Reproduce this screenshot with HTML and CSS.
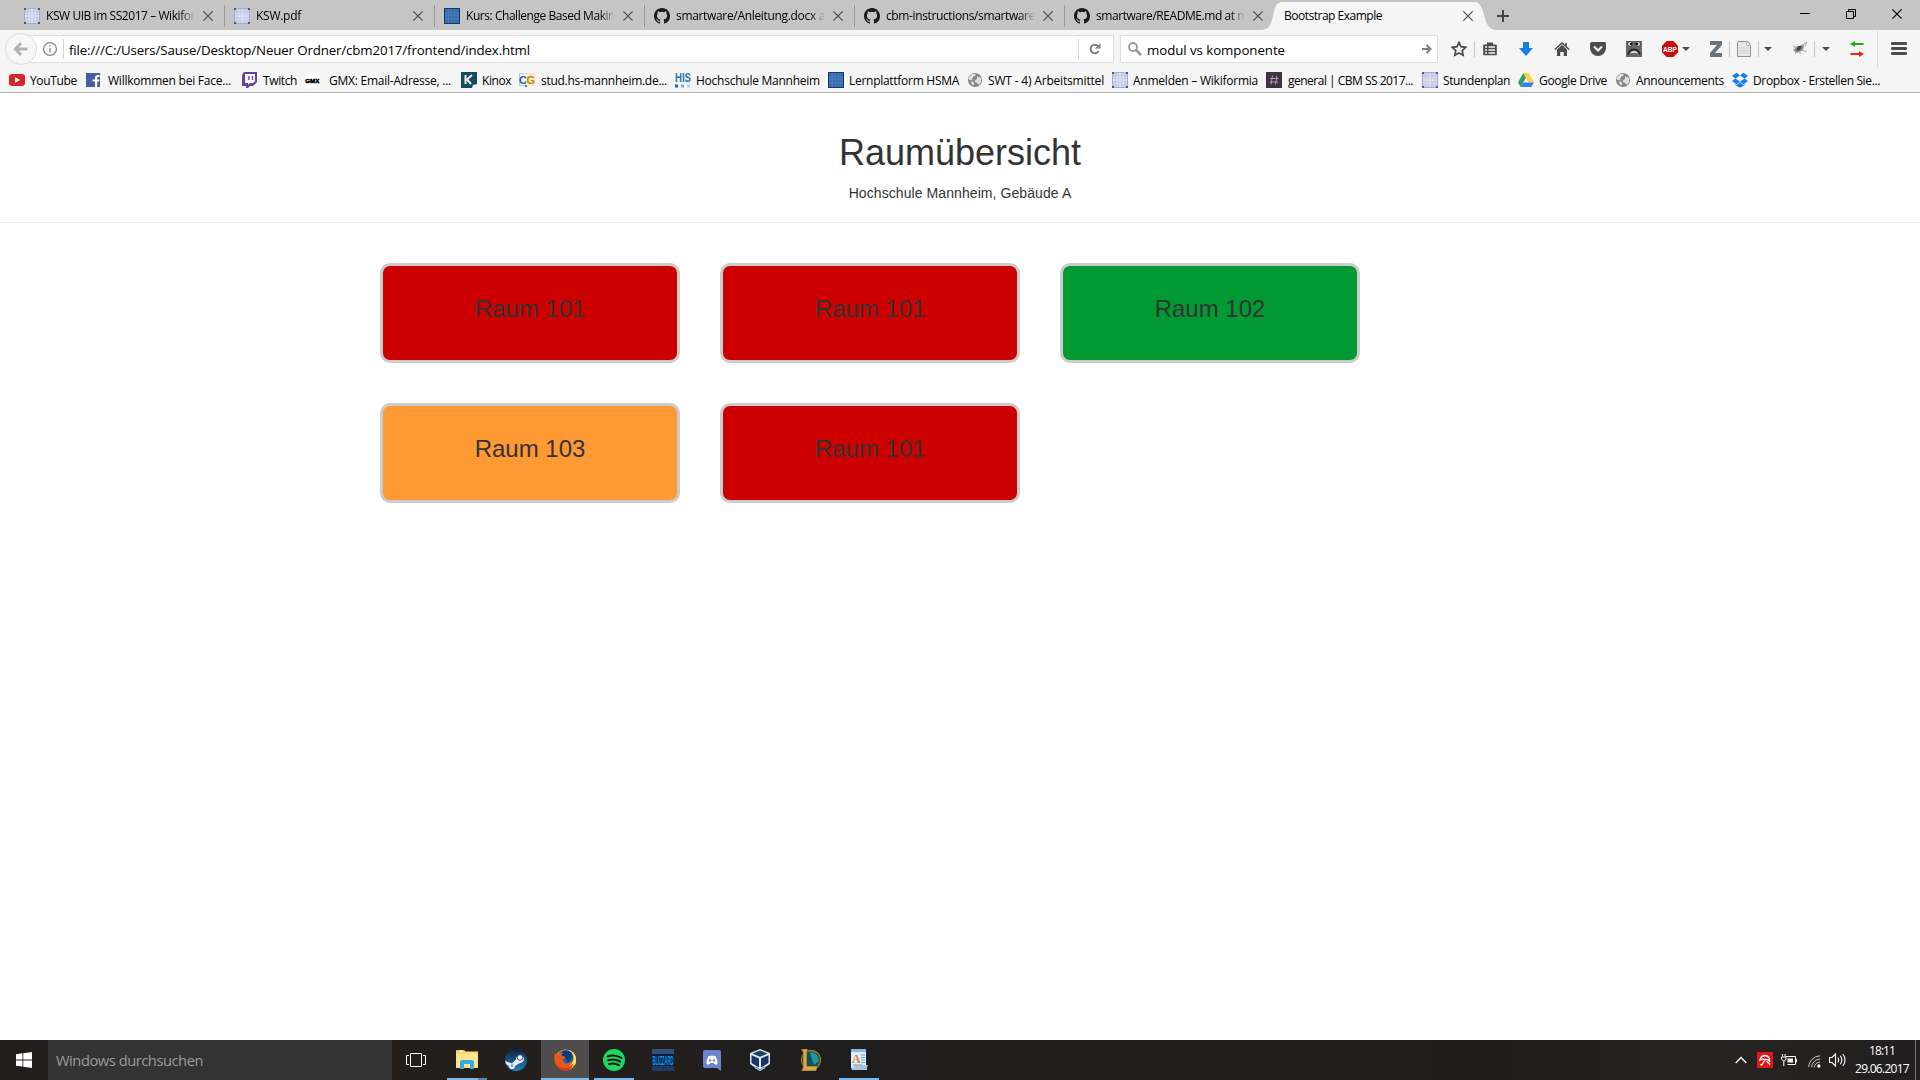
FILE: index.html
```html
<!DOCTYPE html>
<html lang="de">
<head>
<meta charset="utf-8">
<title>Bootstrap Example</title>
<link rel="stylesheet" href="styles.css">
</head>
<body>
<svg class="defs" width="0" height="0" aria-hidden="true">
  <symbol id="x" viewBox="0 0 10 10"><path d="M.4.4l9.2 9.2M9.6.4L.4 9.6" stroke="currentColor" stroke-width="1.2" fill="none"/></symbol>
  <symbol id="wiki" viewBox="0 0 16 16"><rect x=".5" y=".5" width="15" height="15" fill="#c6cce6" stroke="#a6add4"/><path d="M1 5.500h14M1 11.500h14M5.500 1v14M11.500 1v14" stroke="#d3d8ec" /><path d="M8 1v14M1 8h14" stroke="#e6e9f6"/><path d="M0 0h2v2H0zM14 0h2v2h-2zM0 14h2v2H0zM14 14h2v2h-2z" fill="#4a559f"/></symbol>
  <symbol id="moodle" viewBox="0 0 16 16"><rect x=".5" y=".5" width="15" height="15" fill="#3b6cac" stroke="#073a80"/><path d="M1 4.500h14M1 7.500h14M1 10.500h14M4.500 1v14M7.500 1v14M10.500 1v14" stroke="#6d95c6" stroke-width=".6" opacity=".5"/></symbol>
  <symbol id="github" viewBox="0 0 16 16"><path fill="#1a1a1a" fill-rule="evenodd" d="M8 0C3.580 0 0 3.580 0 8c0 3.540 2.290 6.530 5.470 7.590.4.070.55-.17.55-.38 0-.19-.01-.82-.01-1.490-2.010.37-2.530-.49-2.690-.94-.09-.23-.48-.94-.82-1.130-.28-.15-.68-.52-.01-.53.63-.01 1.080.58 1.230.82.72 1.210 1.870.87 2.330.66.070-.52.28-.87.51-1.070-1.780-.2-3.640-.89-3.640-3.950 0-.87.31-1.590.82-2.150-.08-.2-.36-1.020.08-2.120 0 0 .67-.21 2.200.82a7.600 7.600 0 0 1 4 0c1.530-1.040 2.200-.82 2.200-.82.44 1.100.16 1.920.08 2.120.51.56.82 1.270.82 2.150 0 3.070-1.870 3.750-3.650 3.950.29.25.54.73.54 1.480 0 1.070-.01 1.930-.01 2.200 0 .21.15.46.55.38A8 8 0 0 0 16 8c0-4.420-3.580-8-8-8z"/></symbol>
  <symbol id="globe" viewBox="0 0 16 16"><circle cx="8" cy="8" r="7" fill="#858585"/><path d="M2 5l3-3 4 0-1 2-2 1-1 3-3 0zM10 4l4 2 0 4-2 3-2-2-2-1 0-2 2-1zM4 9l3 1 0 3-2 0z" fill="#dedede"/></symbol>
  <symbol id="caret" viewBox="0 0 8 4"><path d="M0 0h8L4 4z" fill="#4c4c4c"/></symbol>
</svg>

<header class="browser">
  <div class="tabs">
    <div class="tab"><svg class="i16"><use href="#wiki"/></svg><span class="title"><span class="fit" data-w="149">KSW UIB im SS2017 – Wikifor</span></span><svg class="close"><use href="#x"/></svg></div>
    <div class="tab"><svg class="i16"><use href="#wiki"/></svg><span class="title"><span class="fit" data-w="45">KSW.pdf</span></span><svg class="close"><use href="#x"/></svg></div>
    <div class="tab"><svg class="i16"><use href="#moodle"/></svg><span class="title"><span class="fit" data-w="149">Kurs: Challenge Based Makin</span></span><svg class="close"><use href="#x"/></svg></div>
    <div class="tab"><svg class="i16"><use href="#github"/></svg><span class="title"><span class="fit" data-w="149">smartware/Anleitung.docx a</span></span><svg class="close"><use href="#x"/></svg></div>
    <div class="tab"><svg class="i16"><use href="#github"/></svg><span class="title"><span class="fit" data-w="149">cbm-instructions/smartware</span></span><svg class="close"><use href="#x"/></svg></div>
    <div class="tab last"><svg class="i16"><use href="#github"/></svg><span class="title"><span class="fit" data-w="152">smartware/README.md at m</span></span><svg class="close"><use href="#x"/></svg></div>
    <div class="tab active">
      <svg class="shape" viewBox="0 0 236 28"><path d="M0 28C17 28 8 0 21 0H213C227 0 219 28 236 28z" fill="#f5f5f5"/></svg>
      <span class="title"><span class="fit" data-w="98">Bootstrap Example</span></span><svg class="close"><use href="#x"/></svg>
    </div>
    <svg class="plus" viewBox="0 0 12 12"><path d="M6 0v12M0 6h12" stroke="#444" stroke-width="2"/></svg>
    <div class="window-buttons">
      <svg viewBox="0 0 10 10"><path d="M0 4.500h10" stroke="#000"/></svg>
      <svg viewBox="0 0 10 10"><path d="M.5 2.500h7v7h-7zM2.500 2.500v-2h7v7h-2" stroke="#000" fill="none"/></svg>
      <svg viewBox="0 0 10 10"><use href="#x"/></svg>
    </div>
  </div>

  <div class="nav">
    <div class="back"><svg width="16" height="16" viewBox="0 0 16 16"><path d="M14.500 8H3M8 2L2.500 8 8 14" stroke="#b2b2b2" stroke-width="3" fill="none"/></svg></div>
    <div class="url">
      <svg width="14" height="14" viewBox="0 0 14 14"><circle cx="7" cy="7" r="6.400" fill="none" stroke="#858585" stroke-width="1.200"/><path d="M7 6v4.500M7 3.300v1.500" stroke="#858585" stroke-width="1.400"/></svg>
      <span class="address"><span class="fit" data-w="461">file:///C:/Users/Sause/Desktop/Neuer Ordner/cbm2017/frontend/index.html</span></span>
      <span class="reload"><svg width="12" height="12" viewBox="0 0 12 12"><path d="M9.600 8.200A4.300 4.300 0 1 1 9 3" fill="none" stroke="#808080" stroke-width="2"/><path d="M11.500 0v5.500H6z" fill="#808080"/></svg></span>
    </div>
    <div class="search">
      <svg width="14" height="14" viewBox="0 0 14 14"><circle cx="5" cy="5" r="4" fill="none" stroke="#999" stroke-width="1.800"/><path d="M8 8l5 5" stroke="#999" stroke-width="2.600"/></svg>
      <span class="fit" data-w="138">modul vs komponente</span>
      <svg class="go" width="10" height="10" viewBox="0 0 10 10"><path d="M0 5h8M4.500 1L8.500 5l-4 4" fill="none" stroke="#808080" stroke-width="2"/></svg>
    </div>
    <div class="tools">
      <svg viewBox="0 0 16 16"><path d="M8 1.400l2 4.300 4.700.6-3.500 3.200.9 4.700L8 11.900l-4.100 2.300.9-4.700L1.300 6.300 6 5.700z" fill="none" stroke="#4c4c4c" stroke-width="1.700"/></svg>
      <i class="sep"></i>
      <svg viewBox="0 0 16 16"><path d="M2 3.500h3V1.500h6v2h3q.8 0 .8.800v9.200q0 .8-.8.800H2q-.8 0-.8-.8V4.300q0-.8.8-.8z" fill="#4c4c4c"/><path d="M3 6h2M6.500 6H13M3 9h2M6.500 9H13M3 12h2M6.500 12H13" stroke="#f5f5f5" stroke-width="1.500"/></svg>
      <svg viewBox="0 0 16 16"><path d="M5 1h6v6h4l-7 8-7-8h4z" fill="#177ee6"/></svg>
      <svg viewBox="0 0 16 16"><path d="M3 8.500l5-4.500 5 4.500V15H9.700v-4H6.300v4H3z" fill="#4c4c4c"/><path d="M.8 8.500L8 2l7.200 6.500M12 2v3" fill="none" stroke="#4c4c4c" stroke-width="1.600"/></svg>
      <svg viewBox="0 0 16 16"><path d="M1.500 1h13Q16 1 16 2.500V7a8 8 0 0 1-16 0V2.500Q0 1 1.500 1z" fill="#4c4c4c"/><path d="M4 5.500l4 4 4-4" fill="none" stroke="#f5f5f5" stroke-width="2"/></svg>
      <svg viewBox="0 0 16 16"><path d="M0 0h16v16H0z" fill="#686868"/><circle cx="4" cy="3" r="2.600" fill="#ccc" stroke="#333" stroke-width=".8"/><circle cx="12" cy="3" r="2.600" fill="#ccc" stroke="#333" stroke-width=".8"/><circle cx="5" cy="3" r="1.200"/><circle cx="11" cy="3" r="1.200"/><path d="M2 13.500q1-5 6-5t6 5" fill="none" stroke="#1c1c1c" stroke-width="1.400"/><path d="M4 12.500q1-2.500 4-2.500t4 2.500q-4-1.500-8 0z" fill="#eee"/></svg>
      <svg viewBox="0 0 16 16"><path d="M4.700 0h6.600L16 4.700v6.600L11.300 16H4.700L0 11.300V4.700z" fill="#c90d0d"/><text x="8" y="11" text-anchor="middle" textLength="14" lengthAdjust="spacingAndGlyphs" class="abp">ABP</text></svg>
      <svg class="caret"><use href="#caret"/></svg>
      <svg viewBox="0 0 16 16"><path d="M2 0h12v4L7 12h7v4H2v-4l7-8H2z" fill="#67747f"/></svg>
      <i class="sep"></i>
      <svg viewBox="0 0 16 16"><path d="M2.500.500h8q3 0 4 4v11h-13v-14q0-1 1-1z" fill="#e6e6e6" stroke="#8e8e8e"/><path d="M10 1q1 1 .5 3.500h3.500" fill="#fff" stroke="#bbb"/><path d="M3 7h10M3 9.500h10M3 12h10" stroke="#d4d4d4"/></svg>
      <i class="sep"></i>
      <svg class="caret"><use href="#caret"/></svg>
      <svg viewBox="0 0 16 16"><path d="M3 6l9-2-1 5-6 3-3-2z" fill="#888"/><path d="M8 5l7-3.500-2 4M6 7L1 5M5 8l-4 1M5 10l-2 3M8 10l0 3M10 9l5 2" stroke="#aaa" fill="none"/><path d="M6 5l4 0-2 4-4 1z" fill="#444"/></svg>
      <i class="sep"></i>
      <svg class="caret"><use href="#caret"/></svg>
      <svg viewBox="0 0 16 16"><path d="M14.500 3H6" stroke="#1bb116" stroke-width="2"/><path d="M1 3l5-3v6z" fill="#1bb116"/><path d="M1.500 13H10" stroke="#f51c1c" stroke-width="2"/><path d="M15 13l-5-3v6z" fill="#f51c1c"/></svg>
      <i class="sep tall"></i>
      <svg viewBox="0 0 16 16"><path d="M1.300 2.500h13.400M1.300 7.500h13.400M1.300 12.500h13.400" stroke="#4c4c4c" stroke-width="2.800" stroke-linecap="round"/></svg>
    </div>
  </div>

  <div class="bookmarks">
    <a><svg class="i16" viewBox="0 0 16 16"><rect y="2" width="16" height="12" rx="3" fill="#d9252a"/><path d="M6 5l5 3-5 3z" fill="#fff"/></svg><span class="fit" data-w="47">YouTube</span></a>
    <a class="wide"><svg class="i16" viewBox="0 0 16 16"><path d="M1 1h14v14H1z" fill="#4460a0"/><path d="M10 15V9.500H7.500v-2H10V6q0-3 3-3h1.500v2H13q-.8 0-.8 1v1.500h2.300l-.3 2h-2V15z" fill="#fff"/></svg><span class="fit" data-w="123">Willkommen bei Face...</span></a>
    <a><svg class="i16" viewBox="0 0 16 16"><path d="M2 0h13v10l-4 4H8l-2 2H4v-2H0V3z" fill="#6441a4"/><path d="M3 2h10v7l-2 2H8l-2 2v-2H3z" fill="#fff"/><path d="M7 4v4M10.500 4v4" stroke="#6441a4" stroke-width="1.400"/></svg><span class="fit" data-w="34">Twitch</span></a>
    <a class="wider"><svg class="i16" viewBox="0 0 16 16"><path d="M1 1h15v15H1z" fill="#fff"/><text x="8.300" y="10.500" text-anchor="middle" textLength="14" lengthAdjust="spacingAndGlyphs" class="gmx">GMX</text></svg><span class="fit" data-w="122">GMX: Email-Adresse, ...</span></a>
    <a><svg class="i16" viewBox="0 0 16 16"><path d="M0 0h16v12l-4 1-1 3H0z" fill="#134b63"/><path d="M4.500 3v9M11 3L6 7.500l4 4.500" stroke="#e5f2f5" stroke-width="2" fill="none"/></svg><span class="fit" data-w="29">Kinox</span></a>
    <a class="plus1"><svg class="i16" viewBox="0 0 16 16"><path d="M.5 1.500h15v12H.5z" fill="#fafafa" stroke="#bbc7d6"/><path d="M8 1h8v13H8z" fill="#f7e8bd"/><text x="0" y="11.500" class="cg" fill="#1660a8">C</text><text x="7.500" y="11.500" class="cg" fill="#c38a00">G</text><circle cx="7" cy="14" r="1.200" fill="#3c85cb"/></svg><span class="fit" data-w="126">stud.hs-mannheim.de...</span></a>
    <a><svg class="i16" viewBox="0 0 16 16"><text x="0" y="10" textLength="16" lengthAdjust="spacingAndGlyphs" class="his">HIS</text><path d="M0 12.500h3v3H0z" fill="#1369b6"/><path d="M6 12.500h3v3H6z" fill="#7ea9dc"/><path d="M12 12.500h3v3h-3z" fill="#b9cdee"/></svg><span class="fit" data-w="124">Hochschule Mannheim</span></a>
    <a><svg class="i16"><use href="#moodle"/></svg><span class="fit" data-w="110">Lernplattform HSMA</span></a>
    <a><svg class="i16"><use href="#globe"/></svg><span class="fit" data-w="116">SWT - 4) Arbeitsmittel</span></a>
    <a><svg class="i16"><use href="#wiki"/></svg><span class="fit" data-w="125">Anmelden – Wikiformia</span></a>
    <a class="plus1"><svg class="i16" viewBox="0 0 16 16"><path d="M0 0h16v16H0z" fill="#463045"/><path d="M6.500 3.500l-1.500 9M11 3.500l-1.500 9M4 6.500h8.500M3.500 10H12" stroke="#ad9bab" /></svg><span class="fit" data-w="125">general | CBM SS 2017...</span></a>
    <a><svg class="i16"><use href="#wiki"/></svg><span class="fit" data-w="67">Stundenplan</span></a>
    <a><svg class="i16" viewBox="0 0 16 16"><path d="M5.300 1L0 10.500 2.700 15 8 5.700z" fill="#26a565"/><path d="M5.300 1h5.400L16 10.500h-5.300z" fill="#fdcf43"/><path d="M5.400 10.500H16L13.300 15H2.700z" fill="#3b7ded"/></svg><span class="fit" data-w="68">Google Drive</span></a>
    <a><svg class="i16"><use href="#globe"/></svg><span class="fit" data-w="88">Announcements</span></a>
    <a><svg class="i16" viewBox="0 0 16 16"><path d="M4.700.8L8 3.500 3.300 6.500 0 3.800zM11.300.8L8 3.500l4.700 3L16 3.800zM0 9.200l3.300-2.700L8 9.500l-3.300 2.700zM16 9.200l-3.300-2.700L8 9.500l3.300 2.700zM8 10.200l3.200 2.700 1.500-1v1L8 15.700l-4.700-2.800v-1l1.500 1z" fill="#127ef0"/></svg><span class="fit" data-w="127">Dropbox - Erstellen Sie...</span></a>
  </div>
</header>

<main class="page">
  <div class="page-head">
    <h1>Raumübersicht</h1>
    <p>Hochschule Mannheim, Gebäude A</p>
  </div>
  <section class="rooms">
    <div class="room busy">Raum 101</div>
    <div class="room busy">Raum 101</div>
    <div class="room free">Raum 102</div>
    <div class="room soon">Raum 103</div>
    <div class="room busy">Raum 101</div>
  </section>
</main>

<footer class="taskbar">
  <div class="start"><svg width="16" height="16" viewBox="0 0 16 16"><path d="M0 2.300L6.500 1.300V7.500H0zM7.300 1.200L16 0v7.500H7.300zM0 8.400h6.500v6.200L0 13.700zM7.300 8.400H16V16l-8.700-1.200z" fill="#fff"/></svg></div>
  <div class="find"><span class="fit" data-w="147">Windows durchsuchen</span></div>
  <div class="taskview"><svg width="20" height="14" viewBox="0 0 20 14"><path d="M4.500.5h11v13h-11zM3 2.500H.5v9H3M17 2.500h2.500v9H17" fill="none" stroke="#fff"/></svg></div>
  <div class="apps">
    <div class="app stacked"><svg viewBox="0 0 22 22"><path d="M0 2q0-1 1-1h7l1.500 1.500H22V19H0z" fill="#fbd978"/><path d="M1 1h7v1.500H1z" fill="#f5b83a"/><path d="M3 1.500h4v1.200H3z" fill="#fff"/><path d="M0 5h22v13H0z" fill="#ffe48f"/><path d="M4 20v-7q0-2 2-2h10q2 0 2 2v7h-4v-5H8v5z" fill="#38abe2"/></svg></div>
    <div class="app"><svg viewBox="0 0 22 22"><defs><linearGradient id="st" x2="0" y2="1"><stop stop-color="#10203e"/><stop offset="1" stop-color="#2382bb"/></linearGradient></defs><circle cx="11" cy="11" r="11" fill="url(#st)"/><path d="M0 12l7 2.500 4-4a4 4 0 1 1 4 3.500l-5 3a3 3 0 0 1-6 0L1 15z" fill="#e9eef3"/><circle cx="15" cy="8.500" r="2.800" fill="#e9eef3" stroke="#31577c"/><circle cx="7" cy="16.500" r="1.500" fill="#7aa9c9"/></svg></div>
    <div class="app current"><svg viewBox="0 0 22 22"><circle cx="11.500" cy="11" r="10.500" fill="#fbb21f"/><path d="M15 1a10.500 10.500 0 0 1 6 15l-5-2z" fill="#ffdc62"/><circle cx="11.500" cy="9" r="8" fill="#1664a7"/><path d="M8 3q5-3 9 1 3 6-3 9-2-5-6-5z" fill="#0b3975"/><path d="M1 4l3 1q3-2 5-1L7 6.500l5 1.500-3 2.500q0 4 4 4 3 0 5-3-1 8-8 8.500Q2 20 .5 12 0 7 1 4z" fill="#e8571b"/><path d="M1.500 14q4 6 11 5 5-1 7-5-2 8-9 8-7-1-9-8z" fill="#d6391c"/></svg></div>
    <div class="app open"><svg viewBox="0 0 22 22"><circle cx="11" cy="11" r="11" fill="#1ed760"/><path d="M4.500 7.500q7-2.500 14 1.500M5.200 11.300q6-2 12 1.400M6 15q5-1.600 10 1.200" stroke="#191414" stroke-width="2" fill="none" stroke-linecap="round"/></svg></div>
    <div class="app"><svg viewBox="0 0 22 22"><path d="M0 0h22v22H0z" fill="#1f3a5c"/><path d="M0 0h22v5H0z" fill="#35517a"/><path d="M0 5h22v12H0z" fill="#06203d"/><text x=".5" y="15.500" textLength="21" lengthAdjust="spacingAndGlyphs" class="bliz">BLIZZARD</text></svg></div>
    <div class="app"><svg viewBox="0 0 22 22"><path d="M4 1h14q2 0 2 2v19l-4-3H4q-2 0-2-2V3q0-2 2-2z" fill="#6d83cb"/><path d="M7.500 7q3.500-1 7 0 2.500 4 2 8-2 1-3 0l-1-1h-3l-1 1q-1 1-3 0-.5-4 2-8z" fill="#fff"/><circle cx="9" cy="11.500" r="1.200" fill="#6d83cb"/><circle cx="13" cy="11.500" r="1.200" fill="#6d83cb"/></svg></div>
    <div class="app vbox"><svg viewBox="0 0 22 22"><path d="M11 0l10 4v11l-10 7-10-7V4z" fill="#dbe5ef"/><path d="M11 1.500l7.500 3L11 7.800 3.500 4.500z" fill="#1b3c64"/><path d="M2.500 6.300L10 9.500v9L2.500 14zM19.500 6.300L12 9.500v9l7.500-4.500z" fill="#143764"/><path d="M6 17l5 3 5-3v2.500L11 22 6 19.500z" fill="#8fa2c4"/></svg></div>
    <div class="app"><svg viewBox="0 0 22 22"><circle cx="12" cy="11" r="9.500" fill="#06525e" stroke="#9b7b31" stroke-width="1.300"/><path d="M11 3q8 0 9 9l-5 4q-3-8-4-13z" fill="#239299"/><path d="M2 0h7l-1 3v14h11l-2 5H2l2-3V3z" fill="#d8a747" stroke="#5b3c13" stroke-width=".6"/></svg></div>
    <div class="app open"><svg viewBox="0 0 22 22"><path d="M3 0h15v17l1 4H4l-1-3z" fill="#d9ecf8"/><path d="M3 0h15v3H3z" fill="#8dbbe0"/><path d="M4 20l3-4h13l-2 5H4z" fill="#a8c6df"/><text x="4" y="14" class="wp">A</text><path d="M13 6h4M13 8.500h4M13 11h4M13 13.500h4M5 16h9" stroke="#70a7d3"/></svg></div>
  </div>
  <div class="tray">
    <svg width="12" height="8" viewBox="0 0 12 8"><path d="M.7 7L6 1.500 11.300 7" fill="none" stroke="#fff" stroke-width="1.300"/></svg>
    <svg width="16" height="16" viewBox="0 0 16 16"><path d="M0 0h16v16H0z" fill="#e2141b"/><path d="M3 8Q4 3.500 8.500 3.500 13 4.500 12.500 9 10.500 7 8 7.500 5 6.500 3 8z" fill="none" stroke="#fff" stroke-width="1.300"/><path d="M8 7.500L6 11q-1 2.500-3 1.500M9.500 9l3.500 3.500" fill="none" stroke="#fff" stroke-width="1.300"/></svg>
    <svg class="battery" width="16" height="12" viewBox="0 0 16 12"><path d="M4.500 2.500h10v8h-8M14.500 5h1v3h-1" fill="none" stroke="#fff"/><path d="M6.500 4.500H12v4H6.500z" fill="#fff"/><path d="M1.500 0v2.500M4 0v2.500M.5 3h4.500v2q-1 2-2.200 2T.5 5zM2.800 7v5" fill="none" stroke="#fff"/></svg>
    <svg class="wifi" width="13" height="13" viewBox="0 0 13 13"><path d="M.6 12A12 12 0 0 1 12 .8M3.500 12.300A9 9 0 0 1 12 4M6.200 12.500A6 6 0 0 1 12 7" fill="none" stroke="#ccc"/><circle cx="10.800" cy="11" r="1.700" fill="#fff"/></svg>
    <svg class="sound" width="17" height="14" viewBox="0 0 17 14"><path d="M.5 4.500H3l3.500-3.500v12L3 9.500H.5zM8.800 4.500q1.700 2.500 0 5M11.300 2.700q3 4.300 0 8.600M13.800 1q4.500 6 0 12" fill="none" stroke="#fff" stroke-width="1.100"/></svg>
  </div>
  <div class="clock"><span class="fit" data-w="26">18:11</span><span class="fit" data-w="54">29.06.2017</span></div>
  <div class="desktop"></div>
</footer>
<script src="fit.js"></script>
</body>
</html>
```
FILE: styles.css
```css
* { box-sizing: border-box; }
body {
  margin: 0;
  width: 1920px;
  height: 1080px;
  overflow: hidden;
  display: flex;
  flex-direction: column;
  background: #fff;
  color: #000;
  font: 12px/16px "Open Sans", "Noto Sans", sans-serif;
}
svg { display: block; flex: none; }
.defs { position: absolute; }
.fit { white-space: nowrap; }
.i16 { width: 16px; height: 16px; }

.tabs {
  display: flex;
  height: 30px;
  padding-left: 15px;
  background: #c5c5c5;
}
.tab {
  display: flex;
  align-items: center;
  width: 210px;
  height: 30px;
  padding: 2px 10px 0 9px;
  flex: none;
  background: linear-gradient(#999, #999) 100% 5px / 1px 22px no-repeat;
}
.tab.last { background: none; }
.tab .title {
  width: 149px;
  margin-left: 6px;
  overflow: hidden;
  display: flex;
  -webkit-mask-image: linear-gradient(90deg, #000 134px, transparent);
  mask-image: linear-gradient(90deg, #000 134px, transparent);
}
.tab .close { width: 10px; height: 10px; margin-left: 8px; color: #4c4c4c; }
.tab.active { position: relative; background: none; }
.tab.active .shape { position: absolute; left: -14px; top: 2px; width: 236px; height: 28px; }
.tab.active .title { position: relative; width: 171px; margin-left: 0; -webkit-mask-image: none; mask-image: none; }
.tab.active .close { position: relative; }
.plus { position: relative; width: 12px; height: 12px; margin: 10px 0 0 12px; }
.window-buttons { display: flex; gap: 36px; margin: 9px 18px 0 auto; }
.window-buttons svg { width: 10px; height: 10px; }

.nav { display: flex; align-items: center; height: 38px; padding-left: 5px; background: #f5f5f5; }
.back {
  z-index: 1;
  display: flex;
  align-items: center;
  justify-content: center;
  width: 32px;
  height: 32px;
  border: 1px solid #dedede;
  border-radius: 50%;
  background: #f7f7f7;
}
.url, .search {
  display: flex;
  align-items: center;
  height: 28px;
  border: 1px solid #dedede;
  background: #fff;
  font-size: 13.3px;
}
.url .fit, .search .fit { padding-top: 2px; }
.url { width: 1093px; margin-left: -16px; padding-left: 21px; }
.address {
  display: flex;
  align-items: center;
  height: 20px;
  margin-left: 6px;
  padding-left: 5px;
  border-left: 1px solid #d5d5d5;
}
.reload {
  display: flex;
  align-items: center;
  height: 20px;
  margin-left: auto;
  padding: 0 12px 0 10px;
  border-left: 1px solid #d5d5d5;
}
.search { width: 318px; margin-left: 6px; padding: 0 5px 0 7px; gap: 5px; }
.search .go { margin-left: auto; }
.tools {
  display: grid;
  grid-template-columns: 23px 8px 36px 36px 36px 36px 36px 20px 26px 21px 7px 22px 6px 28px 22px 8px 27px 28px 13px 16px;
  align-items: center;
  height: 38px;
  margin-left: 13px;
}
.tools svg { width: 16px; height: 16px; }
.tools svg:last-child { margin-left: 1px; }
.tools svg.caret { width: 8px; height: 4px; }
.sep { width: 1px; height: 16px; background: #c6c6c6; }
.sep.tall { height: 36px; background: #d8d8d8; }
.abp { font: bold 7.5px "Liberation Sans", sans-serif; fill: #fff; }

.bookmarks {
  display: grid;
  grid-template-columns: 76px 157px 62px 157px 58px 156px 153px 139px 145px 154px 156px 96px 97px 117px 160px;
  height: 25px;
  padding: 3px 0 0 9px;
  border-bottom: 1px solid #b6b6b6;
  background: #f5f5f5;
}
.bookmarks a { display: flex; align-items: center; height: 18px; gap: 5px; }
.bookmarks .plus1 { gap: 6px; }
.bookmarks .wide { gap: 7px; }
.bookmarks .wider { gap: 9px; }
.bookmarks .fit { padding-top: 2px; }
.gmx { font: bold 6px "Liberation Sans", sans-serif; stroke: #000; stroke-width: .5px; }
.cg { font: bold 11px "Liberation Sans", sans-serif; }
.his { font: bold 12px "Liberation Sans", sans-serif; fill: #1b75b9; }

.page {
  flex: 1;
  font-family: "Liberation Sans", Arial, sans-serif;
  color: #333;
}
.page-head { height: 130px; padding-top: 40px; border-bottom: 1px solid #eee; text-align: center; }
.page-head h1 { margin: 0 0 10px; font-size: 36px; line-height: 40px; font-weight: 400; }
.page-head p { margin: 0; font-size: 14px; line-height: 20px; letter-spacing: .08px; }
.rooms {
  display: grid;
  grid-template-columns: repeat(3, 300px);
  gap: 40px;
  padding: 40px 0 0 380px;
}
.room {
  height: 100px;
  padding-top: 30px;
  border: 3px solid #ccc;
  border-radius: 10px;
  font-size: 24px;
  line-height: 26px;
  text-align: center;
}
.busy { background: #c00; }
.free { background: #093; }
.soon { background: #f93; }

.taskbar {
  display: flex;
  height: 40px;
  background: linear-gradient(90deg, #201d1c, #241f1d 25%, #1f1e1e 45%, #261e1c 62%, #211b1a 78%, #282321 88%, #211f1f);
}
.start { display: flex; align-items: center; width: 48px; padding-left: 16px; }
.find {
  display: flex;
  align-items: center;
  width: 344px;
  padding: 0 0 1px 8px;
  background: #333;
  color: #9b9b9b;
  font-size: 14.7px;
}
.taskview { display: flex; align-items: center; width: 51px; padding-left: 14px; }
.apps { display: flex; gap: 1px; }
.app { display: flex; align-items: center; justify-content: center; width: 48px; }
.app svg { width: 22px; height: 22px; }
.app.vbox { padding-right: 3px; }
.app.open { background: linear-gradient(#76b9ed, #76b9ed) 4px 38px / 40px 2px no-repeat; }
.app.stacked {
  background:
    linear-gradient(#76b9ed, #76b9ed) 4px 38px / 31px 2px no-repeat,
    linear-gradient(#5488b0, #5488b0) 35px 38px / 9px 2px no-repeat;
}
.app.current { background: #4e4c4c; border-bottom: 2px solid #76b9ed; padding-top: 1px; }
.bliz { font: bold 12px "Liberation Sans", sans-serif; fill: #079be8; }
.wp { font: bold 12px "Liberation Serif", serif; fill: #ee8122; }
.tray { display: flex; align-items: center; margin-left: auto; gap: 10px; }
.tray .battery { margin-left: -2px; }
.tray .wifi { margin: 3px 0 0 1px; }
.tray .sound { margin-left: -2px; }
.clock {
  display: flex;
  flex-direction: column;
  align-items: center;
  width: 54px;
  margin-left: 9px;
  padding-top: 2px;
  color: #fff;
  line-height: 18px;
}
.desktop { width: 5px; margin-left: 6px; border-left: 1px solid #777; }
```
FILE: fit.js
```js
// Tracks each label so it fills the width given in data-w.
document.querySelectorAll('.fit').forEach(function (el) {
  var range = document.createRange();
  range.selectNodeContents(el);
  var natural = range.getBoundingClientRect().width;
  var spacing = (Number(el.dataset.w) - natural) / el.textContent.length;
  el.style.letterSpacing = spacing.toFixed(3) + 'px';
});
```
